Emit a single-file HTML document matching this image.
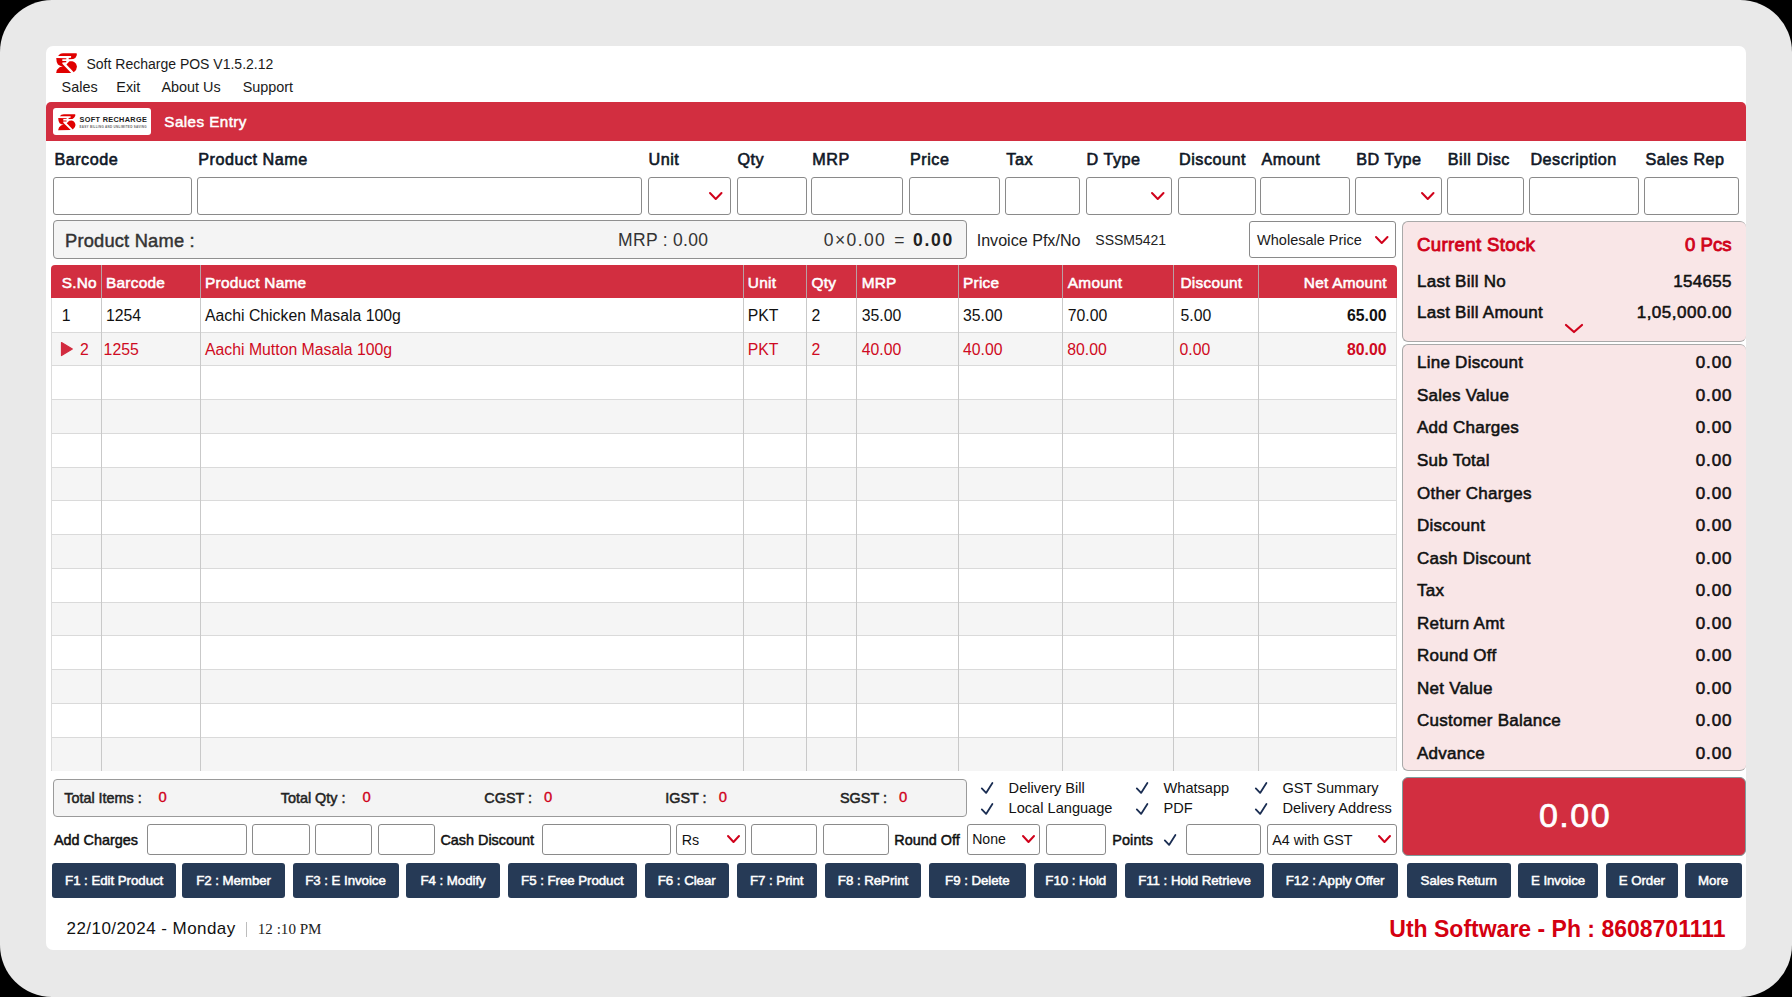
<!DOCTYPE html><html><head><meta charset="utf-8"><style>
html,body{margin:0;padding:0;}
body{width:1792px;height:997px;overflow:hidden;background:#000;position:relative;font-family:"Liberation Sans", sans-serif;color:#111;}
.t{position:absolute;line-height:1;white-space:nowrap;}
.b{position:absolute;}

</style></head><body>
<div class="b" style="left:0.00px;top:0.00px;width:1792.00px;height:997.00px;background:#e9e9e9;border-radius:52px;"></div>
<div class="b" style="left:46.00px;top:46.00px;width:1700.00px;height:904.00px;background:#ffffff;border-radius:7px;"></div>
<svg class="b" style="left:55.78px;top:52.80px;width:21.19px;height:20.55px" viewBox="180 150 660 640" preserveAspectRatio="none" fill="#e00000"><path d="M245,240 L305,178 Q335,160 400,160 L812,158 Q842,168 822,232 Q790,322 718,340 L578,342 L572,302 L648,296 L652,242 Z"/>
<path d="M188,306 L498,310 Q512,326 498,342 L378,346 L376,398 L494,400 Q510,420 494,440 L378,444 L378,488 L655,775 L185,782 Q195,650 290,592 Q340,572 392,570 Q300,555 240,510 Q190,450 188,306 Z"/>
<path d="M505,512 L600,408 L690,404 Q815,440 832,575 Q830,680 732,752 Z"/></svg>
<div class="t" style="top:56.75px;font-size:14px;color:#1a1a1a;left:86.50px;">Soft Recharge POS V1.5.2.12</div>
<div class="t" style="top:79.81px;font-size:14.4px;color:#1a1a1a;left:61.60px;">Sales</div>
<div class="t" style="top:79.81px;font-size:14.4px;color:#1a1a1a;left:116.30px;">Exit</div>
<div class="t" style="top:79.81px;font-size:14.4px;color:#1a1a1a;left:161.50px;">About Us</div>
<div class="t" style="top:79.81px;font-size:14.4px;color:#1a1a1a;left:242.70px;">Support</div>
<div class="b" style="left:46.00px;top:102.00px;width:1700.00px;height:39.00px;background:#d22e40;border-radius:5px 5px 0 0;"></div>
<div class="b" style="left:53.40px;top:108.30px;width:97.60px;height:26.70px;background:#fff;border-radius:3px;"></div>
<svg class="b" style="left:58.00px;top:114.10px;width:17.70px;height:16.50px" viewBox="180 150 660 640" preserveAspectRatio="none" fill="#e00000"><path d="M245,240 L305,178 Q335,160 400,160 L812,158 Q842,168 822,232 Q790,322 718,340 L578,342 L572,302 L648,296 L652,242 Z"/>
<path d="M188,306 L498,310 Q512,326 498,342 L378,346 L376,398 L494,400 Q510,420 494,440 L378,444 L378,488 L655,775 L185,782 Q195,650 290,592 Q340,572 392,570 Q300,555 240,510 Q190,450 188,306 Z"/>
<path d="M505,512 L600,408 L690,404 Q815,440 832,575 Q830,680 732,752 Z"/></svg>
<div class="t" style="top:116.32px;font-size:7.3px;font-weight:700;color:#1a1a1a;letter-spacing:0.33px;left:79.60px;">SOFT RECHARGE</div>
<div class="t" style="top:125.76px;font-size:3.0px;font-weight:700;color:#666;letter-spacing:0.3px;left:79.50px;">EASY BILLING AND UNLIMITED SAVING</div>
<div class="t" style="top:113.93px;font-size:15.2px;color:#fff;letter-spacing:0.45px;left:164.30px;-webkit-text-stroke:0.5px #fff;">Sales Entry</div>
<div class="t" style="top:150.68px;font-size:16.2px;color:#0f1726;letter-spacing:0.5px;left:54.40px;-webkit-text-stroke:0.6px #0f1726;">Barcode</div>
<div class="b" style="left:53.40px;top:177.20px;width:138.90px;height:37.60px;background:#fff;border:1px solid #8a8a8a;box-sizing:border-box;border-radius:3px;"></div>
<div class="t" style="top:150.68px;font-size:16.2px;color:#0f1726;letter-spacing:0.5px;left:198.20px;-webkit-text-stroke:0.6px #0f1726;">Product Name</div>
<div class="b" style="left:197.20px;top:177.20px;width:444.80px;height:37.60px;background:#fff;border:1px solid #8a8a8a;box-sizing:border-box;border-radius:3px;"></div>
<div class="t" style="top:150.68px;font-size:16.2px;color:#0f1726;letter-spacing:0.5px;left:648.50px;-webkit-text-stroke:0.6px #0f1726;">Unit</div>
<div class="b" style="left:647.50px;top:177.20px;width:83.50px;height:37.60px;background:#fff;border:1px solid #8a8a8a;box-sizing:border-box;border-radius:3px;"></div>
<svg class="b" style="left:708.25px;top:190.90px;width:15.5px;height:10px" viewBox="0 0 15.5 10"><path d="M2,2 L7.75,8 L13.5,2" fill="none" stroke="#d0021b" stroke-width="2.0" stroke-linecap="round" stroke-linejoin="round"/></svg>
<div class="t" style="top:150.68px;font-size:16.2px;color:#0f1726;letter-spacing:0.5px;left:737.50px;-webkit-text-stroke:0.6px #0f1726;">Qty</div>
<div class="b" style="left:736.50px;top:177.20px;width:70.00px;height:37.60px;background:#fff;border:1px solid #8a8a8a;box-sizing:border-box;border-radius:3px;"></div>
<div class="t" style="top:150.68px;font-size:16.2px;color:#0f1726;letter-spacing:0.5px;left:812.30px;-webkit-text-stroke:0.6px #0f1726;">MRP</div>
<div class="b" style="left:811.30px;top:177.20px;width:92.20px;height:37.60px;background:#fff;border:1px solid #8a8a8a;box-sizing:border-box;border-radius:3px;"></div>
<div class="t" style="top:150.68px;font-size:16.2px;color:#0f1726;letter-spacing:0.5px;left:910.00px;-webkit-text-stroke:0.6px #0f1726;">Price</div>
<div class="b" style="left:909.00px;top:177.20px;width:91.00px;height:37.60px;background:#fff;border:1px solid #8a8a8a;box-sizing:border-box;border-radius:3px;"></div>
<div class="t" style="top:150.68px;font-size:16.2px;color:#0f1726;letter-spacing:0.5px;left:1006.30px;-webkit-text-stroke:0.6px #0f1726;">Tax</div>
<div class="b" style="left:1005.30px;top:177.20px;width:74.70px;height:37.60px;background:#fff;border:1px solid #8a8a8a;box-sizing:border-box;border-radius:3px;"></div>
<div class="t" style="top:150.68px;font-size:16.2px;color:#0f1726;letter-spacing:0.5px;left:1086.50px;-webkit-text-stroke:0.6px #0f1726;">D Type</div>
<div class="b" style="left:1085.50px;top:177.20px;width:86.80px;height:37.60px;background:#fff;border:1px solid #8a8a8a;box-sizing:border-box;border-radius:3px;"></div>
<svg class="b" style="left:1149.55px;top:190.90px;width:15.5px;height:10px" viewBox="0 0 15.5 10"><path d="M2,2 L7.75,8 L13.5,2" fill="none" stroke="#d0021b" stroke-width="2.0" stroke-linecap="round" stroke-linejoin="round"/></svg>
<div class="t" style="top:150.68px;font-size:16.2px;color:#0f1726;letter-spacing:0.5px;left:1179.00px;-webkit-text-stroke:0.6px #0f1726;">Discount</div>
<div class="b" style="left:1178.00px;top:177.20px;width:77.50px;height:37.60px;background:#fff;border:1px solid #8a8a8a;box-sizing:border-box;border-radius:3px;"></div>
<div class="t" style="top:150.68px;font-size:16.2px;color:#0f1726;letter-spacing:0.5px;left:1261.40px;-webkit-text-stroke:0.6px #0f1726;">Amount</div>
<div class="b" style="left:1260.40px;top:177.20px;width:89.90px;height:37.60px;background:#fff;border:1px solid #8a8a8a;box-sizing:border-box;border-radius:3px;"></div>
<div class="t" style="top:150.68px;font-size:16.2px;color:#0f1726;letter-spacing:0.5px;left:1356.30px;-webkit-text-stroke:0.6px #0f1726;">BD Type</div>
<div class="b" style="left:1355.30px;top:177.20px;width:87.20px;height:37.60px;background:#fff;border:1px solid #8a8a8a;box-sizing:border-box;border-radius:3px;"></div>
<svg class="b" style="left:1419.75px;top:190.90px;width:15.5px;height:10px" viewBox="0 0 15.5 10"><path d="M2,2 L7.75,8 L13.5,2" fill="none" stroke="#d0021b" stroke-width="2.0" stroke-linecap="round" stroke-linejoin="round"/></svg>
<div class="t" style="top:150.68px;font-size:16.2px;color:#0f1726;letter-spacing:0.5px;left:1447.80px;-webkit-text-stroke:0.6px #0f1726;">Bill Disc</div>
<div class="b" style="left:1446.80px;top:177.20px;width:77.40px;height:37.60px;background:#fff;border:1px solid #8a8a8a;box-sizing:border-box;border-radius:3px;"></div>
<div class="t" style="top:150.68px;font-size:16.2px;color:#0f1726;letter-spacing:0.5px;left:1530.40px;-webkit-text-stroke:0.6px #0f1726;">Description</div>
<div class="b" style="left:1529.40px;top:177.20px;width:110.00px;height:37.60px;background:#fff;border:1px solid #8a8a8a;box-sizing:border-box;border-radius:3px;"></div>
<div class="t" style="top:150.68px;font-size:16.2px;color:#0f1726;letter-spacing:0.5px;left:1645.40px;-webkit-text-stroke:0.6px #0f1726;">Sales Rep</div>
<div class="b" style="left:1644.40px;top:177.20px;width:95.10px;height:37.60px;background:#fff;border:1px solid #8a8a8a;box-sizing:border-box;border-radius:3px;"></div>
<div class="b" style="left:53.00px;top:220.20px;width:913.80px;height:38.40px;background:#f4f4f4;border:1px solid #8f8f8f;box-sizing:border-box;border-radius:4px;"></div>
<div class="t" style="top:231.51px;font-size:18.3px;color:#333;letter-spacing:0.2px;left:65.00px;-webkit-text-stroke:0.45px #333;">Product Name :</div>
<div class="t" style="top:232.48px;font-size:17.5px;color:#333;letter-spacing:0.3px;left:618.10px;">MRP : 0.00</div>
<div class="t" style="top:232.48px;font-size:17.5px;color:#333;letter-spacing:0.6px;right:839.80px;margin-right:-0.6px;margin-right:-1.7px;word-spacing:2.5px;"><span style="letter-spacing:1.4px">0×0.00</span> = <b style="color:#222;letter-spacing:1.7px">0.00</b></div>
<div class="t" style="top:231.67px;font-size:16.1px;color:#222;left:976.70px;">Invoice Pfx/No</div>
<div class="t" style="top:233.15px;font-size:14px;color:#222;left:1095.30px;">SSSM5421</div>
<div class="b" style="left:1249.20px;top:221.30px;width:147.20px;height:37.20px;background:#fff;border:1px solid #8a8a8a;box-sizing:border-box;border-radius:3px;"></div>
<div class="t" style="top:232.52px;font-size:14.5px;color:#1a1a1a;left:1257.10px;">Wholesale Price</div>
<svg class="b" style="left:1373.85px;top:234.60px;width:15.5px;height:10px" viewBox="0 0 15.5 10"><path d="M2,2 L7.75,8 L13.5,2" fill="none" stroke="#d0021b" stroke-width="2.0" stroke-linecap="round" stroke-linejoin="round"/></svg>
<div class="b" style="left:51.20px;top:298.30px;width:1345.60px;height:472.50px;background:#fff;border-left:1px solid #dcdcdc;border-right:1px solid #dcdcdc;border-bottom:1px solid #d6d6d6;box-sizing:border-box;"></div>
<div class="b" style="left:52.20px;top:332.05px;width:1343.60px;height:33.75px;background:#f5f5f5;"></div>
<div class="b" style="left:52.20px;top:331.55px;width:1343.60px;height:1.00px;background:#dadada;"></div>
<div class="b" style="left:52.20px;top:365.30px;width:1343.60px;height:1.00px;background:#dadada;"></div>
<div class="b" style="left:52.20px;top:399.55px;width:1343.60px;height:33.75px;background:#f5f5f5;"></div>
<div class="b" style="left:52.20px;top:399.05px;width:1343.60px;height:1.00px;background:#dadada;"></div>
<div class="b" style="left:52.20px;top:432.80px;width:1343.60px;height:1.00px;background:#dadada;"></div>
<div class="b" style="left:52.20px;top:467.05px;width:1343.60px;height:33.75px;background:#f5f5f5;"></div>
<div class="b" style="left:52.20px;top:466.55px;width:1343.60px;height:1.00px;background:#dadada;"></div>
<div class="b" style="left:52.20px;top:500.30px;width:1343.60px;height:1.00px;background:#dadada;"></div>
<div class="b" style="left:52.20px;top:534.55px;width:1343.60px;height:33.75px;background:#f5f5f5;"></div>
<div class="b" style="left:52.20px;top:534.05px;width:1343.60px;height:1.00px;background:#dadada;"></div>
<div class="b" style="left:52.20px;top:567.80px;width:1343.60px;height:1.00px;background:#dadada;"></div>
<div class="b" style="left:52.20px;top:602.05px;width:1343.60px;height:33.75px;background:#f5f5f5;"></div>
<div class="b" style="left:52.20px;top:601.55px;width:1343.60px;height:1.00px;background:#dadada;"></div>
<div class="b" style="left:52.20px;top:635.30px;width:1343.60px;height:1.00px;background:#dadada;"></div>
<div class="b" style="left:52.20px;top:669.55px;width:1343.60px;height:33.75px;background:#f5f5f5;"></div>
<div class="b" style="left:52.20px;top:669.05px;width:1343.60px;height:1.00px;background:#dadada;"></div>
<div class="b" style="left:52.20px;top:702.80px;width:1343.60px;height:1.00px;background:#dadada;"></div>
<div class="b" style="left:52.20px;top:737.05px;width:1343.60px;height:33.75px;background:#f5f5f5;"></div>
<div class="b" style="left:52.20px;top:736.55px;width:1343.60px;height:1.00px;background:#dadada;"></div>
<div class="b" style="left:51.20px;top:265.10px;width:1345.60px;height:33.20px;background:#d22e40;border-radius:4px 4px 0 0;"></div>
<div class="b" style="left:101.00px;top:265.10px;width:1.00px;height:505.70px;background:#c9c9c9;"></div>
<div class="b" style="left:200.00px;top:265.10px;width:1.00px;height:505.70px;background:#c9c9c9;"></div>
<div class="b" style="left:742.80px;top:265.10px;width:1.00px;height:505.70px;background:#c9c9c9;"></div>
<div class="b" style="left:806.20px;top:265.10px;width:1.00px;height:505.70px;background:#c9c9c9;"></div>
<div class="b" style="left:856.30px;top:265.10px;width:1.00px;height:505.70px;background:#c9c9c9;"></div>
<div class="b" style="left:958.00px;top:265.10px;width:1.00px;height:505.70px;background:#c9c9c9;"></div>
<div class="b" style="left:1061.50px;top:265.10px;width:1.00px;height:505.70px;background:#c9c9c9;"></div>
<div class="b" style="left:1173.10px;top:265.10px;width:1.00px;height:505.70px;background:#c9c9c9;"></div>
<div class="b" style="left:1258.10px;top:265.10px;width:1.00px;height:505.70px;background:#c9c9c9;"></div>
<div class="b" style="left:101.00px;top:265.10px;width:1.00px;height:33.20px;background:#b9a0a4;"></div>
<div class="b" style="left:200.00px;top:265.10px;width:1.00px;height:33.20px;background:#b9a0a4;"></div>
<div class="b" style="left:742.80px;top:265.10px;width:1.00px;height:33.20px;background:#b9a0a4;"></div>
<div class="b" style="left:806.20px;top:265.10px;width:1.00px;height:33.20px;background:#b9a0a4;"></div>
<div class="b" style="left:856.30px;top:265.10px;width:1.00px;height:33.20px;background:#b9a0a4;"></div>
<div class="b" style="left:958.00px;top:265.10px;width:1.00px;height:33.20px;background:#b9a0a4;"></div>
<div class="b" style="left:1061.50px;top:265.10px;width:1.00px;height:33.20px;background:#b9a0a4;"></div>
<div class="b" style="left:1173.10px;top:265.10px;width:1.00px;height:33.20px;background:#b9a0a4;"></div>
<div class="b" style="left:1258.10px;top:265.10px;width:1.00px;height:33.20px;background:#b9a0a4;"></div>
<div class="t" style="top:274.76px;font-size:15.4px;color:#fff;letter-spacing:0.25px;left:61.70px;-webkit-text-stroke:0.55px #fff;">S.No</div>
<div class="t" style="top:274.76px;font-size:15.4px;color:#fff;letter-spacing:0.25px;left:106.00px;-webkit-text-stroke:0.55px #fff;">Barcode</div>
<div class="t" style="top:274.76px;font-size:15.4px;color:#fff;letter-spacing:0.25px;left:205.00px;-webkit-text-stroke:0.55px #fff;">Product Name</div>
<div class="t" style="top:274.76px;font-size:15.4px;color:#fff;letter-spacing:0.25px;left:747.80px;-webkit-text-stroke:0.55px #fff;">Unit</div>
<div class="t" style="top:274.76px;font-size:15.4px;color:#fff;letter-spacing:0.25px;left:811.60px;-webkit-text-stroke:0.55px #fff;">Qty</div>
<div class="t" style="top:274.76px;font-size:15.4px;color:#fff;letter-spacing:0.25px;left:861.70px;-webkit-text-stroke:0.55px #fff;">MRP</div>
<div class="t" style="top:274.76px;font-size:15.4px;color:#fff;letter-spacing:0.25px;left:963.00px;-webkit-text-stroke:0.55px #fff;">Price</div>
<div class="t" style="top:274.76px;font-size:15.4px;color:#fff;letter-spacing:0.25px;left:1067.80px;-webkit-text-stroke:0.55px #fff;">Amount</div>
<div class="t" style="top:274.76px;font-size:15.4px;color:#fff;letter-spacing:0.25px;left:1180.50px;-webkit-text-stroke:0.55px #fff;">Discount</div>
<div class="t" style="top:274.76px;font-size:15.4px;color:#fff;letter-spacing:0.25px;right:405.50px;margin-right:-0.25px;-webkit-text-stroke:0.55px #fff;">Net Amount</div>
<div class="t" style="top:308.32px;font-size:15.8px;left:61.80px;">1</div>
<div class="t" style="top:308.32px;font-size:15.8px;left:106.00px;">1254</div>
<div class="t" style="top:308.32px;font-size:15.8px;left:205.00px;">Aachi Chicken Masala 100g</div>
<div class="t" style="top:308.32px;font-size:15.8px;left:747.80px;">PKT</div>
<div class="t" style="top:308.32px;font-size:15.8px;left:811.60px;">2</div>
<div class="t" style="top:308.32px;font-size:15.8px;left:861.70px;">35.00</div>
<div class="t" style="top:308.32px;font-size:15.8px;left:963.00px;">35.00</div>
<div class="t" style="top:308.32px;font-size:15.8px;left:1067.80px;">70.00</div>
<div class="t" style="top:308.32px;font-size:15.8px;left:1180.50px;">5.00</div>
<div class="t" style="top:308.32px;font-size:15.8px;font-weight:700;right:405.50px;">65.00</div>
<svg class="b" style="left:60px;top:340.7px;width:14px;height:16px" viewBox="0 0 14 16"><path d="M1.5,1.5 L12.3,8 L1.5,14.5 Z" fill="#d22b3f" stroke="#d22b3f" stroke-width="1.2" stroke-linejoin="round"/></svg>
<div class="t" style="top:341.82px;font-size:15.8px;color:#cf0a22;left:80.00px;">2</div>
<div class="t" style="top:341.82px;font-size:15.8px;color:#cf0a22;left:103.60px;">1255</div>
<div class="t" style="top:341.82px;font-size:15.8px;color:#cf0a22;left:205.00px;">Aachi Mutton Masala 100g</div>
<div class="t" style="top:341.82px;font-size:15.8px;color:#cf0a22;left:747.80px;">PKT</div>
<div class="t" style="top:341.82px;font-size:15.8px;color:#cf0a22;left:811.60px;">2</div>
<div class="t" style="top:341.82px;font-size:15.8px;color:#cf0a22;left:861.70px;">40.00</div>
<div class="t" style="top:341.82px;font-size:15.8px;color:#cf0a22;left:963.00px;">40.00</div>
<div class="t" style="top:341.82px;font-size:15.8px;color:#cf0a22;left:1067.30px;">80.00</div>
<div class="t" style="top:341.82px;font-size:15.8px;color:#cf0a22;left:1179.50px;">0.00</div>
<div class="t" style="top:341.82px;font-size:15.8px;font-weight:700;color:#cf0a22;right:405.50px;">80.00</div>
<div class="b" style="left:1401.60px;top:221.00px;width:344.40px;height:121.20px;background:#f9e6e7;border:1px solid #a9a9a9;box-sizing:border-box;border-radius:6px;border-right:none;"></div>
<div class="b" style="left:1401.60px;top:343.60px;width:344.40px;height:427.20px;background:#f9e6e7;border:1px solid #a9a9a9;box-sizing:border-box;border-radius:6px;border-right:none;"></div>
<div class="t" style="top:235.85px;font-size:18.6px;color:#d0021b;letter-spacing:0.35px;left:1417.00px;-webkit-text-stroke:0.85px #d0021b;">Current Stock</div>
<div class="t" style="top:235.85px;font-size:18.6px;color:#d0021b;right:60.50px;-webkit-text-stroke:0.85px #d0021b;">0 Pcs</div>
<div class="t" style="top:272.51px;font-size:17px;letter-spacing:0.25px;left:1417.00px;-webkit-text-stroke:0.55px #111;">Last Bill No</div>
<div class="t" style="top:272.51px;font-size:17px;letter-spacing:0.3px;right:60.50px;margin-right:-0.3px;-webkit-text-stroke:0.55px #111;">154655</div>
<div class="t" style="top:303.61px;font-size:17px;letter-spacing:0.25px;left:1417.00px;-webkit-text-stroke:0.55px #111;">Last Bill Amount</div>
<div class="t" style="top:303.61px;font-size:17px;letter-spacing:0.5px;right:60.50px;margin-right:-0.5px;-webkit-text-stroke:0.55px #111;">1,05,000.00</div>
<svg class="b" style="left:1564.00px;top:323.00px;width:20px;height:11px" viewBox="0 0 20 11"><path d="M2,2 L10.0,9 L18,2" fill="none" stroke="#d0021b" stroke-width="2.2" stroke-linecap="round" stroke-linejoin="round"/></svg>
<div class="t" style="top:354.31px;font-size:17px;letter-spacing:0.25px;left:1417.00px;-webkit-text-stroke:0.55px #111;">Line Discount</div>
<div class="t" style="top:354.31px;font-size:17px;letter-spacing:0.9px;right:60.50px;margin-right:-0.9px;-webkit-text-stroke:0.55px #111;">0.00</div>
<div class="t" style="top:386.86px;font-size:17px;letter-spacing:0.25px;left:1417.00px;-webkit-text-stroke:0.55px #111;">Sales Value</div>
<div class="t" style="top:386.86px;font-size:17px;letter-spacing:0.9px;right:60.50px;margin-right:-0.9px;-webkit-text-stroke:0.55px #111;">0.00</div>
<div class="t" style="top:419.41px;font-size:17px;letter-spacing:0.25px;left:1417.00px;-webkit-text-stroke:0.55px #111;">Add Charges</div>
<div class="t" style="top:419.41px;font-size:17px;letter-spacing:0.9px;right:60.50px;margin-right:-0.9px;-webkit-text-stroke:0.55px #111;">0.00</div>
<div class="t" style="top:451.96px;font-size:17px;letter-spacing:0.25px;left:1417.00px;-webkit-text-stroke:0.55px #111;">Sub Total</div>
<div class="t" style="top:451.96px;font-size:17px;letter-spacing:0.9px;right:60.50px;margin-right:-0.9px;-webkit-text-stroke:0.55px #111;">0.00</div>
<div class="t" style="top:484.51px;font-size:17px;letter-spacing:0.25px;left:1417.00px;-webkit-text-stroke:0.55px #111;">Other Charges</div>
<div class="t" style="top:484.51px;font-size:17px;letter-spacing:0.9px;right:60.50px;margin-right:-0.9px;-webkit-text-stroke:0.55px #111;">0.00</div>
<div class="t" style="top:517.06px;font-size:17px;letter-spacing:0.25px;left:1417.00px;-webkit-text-stroke:0.55px #111;">Discount</div>
<div class="t" style="top:517.06px;font-size:17px;letter-spacing:0.9px;right:60.50px;margin-right:-0.9px;-webkit-text-stroke:0.55px #111;">0.00</div>
<div class="t" style="top:549.61px;font-size:17px;letter-spacing:0.25px;left:1417.00px;-webkit-text-stroke:0.55px #111;">Cash Discount</div>
<div class="t" style="top:549.61px;font-size:17px;letter-spacing:0.9px;right:60.50px;margin-right:-0.9px;-webkit-text-stroke:0.55px #111;">0.00</div>
<div class="t" style="top:582.16px;font-size:17px;letter-spacing:0.25px;left:1417.00px;-webkit-text-stroke:0.55px #111;">Tax</div>
<div class="t" style="top:582.16px;font-size:17px;letter-spacing:0.9px;right:60.50px;margin-right:-0.9px;-webkit-text-stroke:0.55px #111;">0.00</div>
<div class="t" style="top:614.71px;font-size:17px;letter-spacing:0.25px;left:1417.00px;-webkit-text-stroke:0.55px #111;">Return Amt</div>
<div class="t" style="top:614.71px;font-size:17px;letter-spacing:0.9px;right:60.50px;margin-right:-0.9px;-webkit-text-stroke:0.55px #111;">0.00</div>
<div class="t" style="top:647.26px;font-size:17px;letter-spacing:0.25px;left:1417.00px;-webkit-text-stroke:0.55px #111;">Round Off</div>
<div class="t" style="top:647.26px;font-size:17px;letter-spacing:0.9px;right:60.50px;margin-right:-0.9px;-webkit-text-stroke:0.55px #111;">0.00</div>
<div class="t" style="top:679.81px;font-size:17px;letter-spacing:0.25px;left:1417.00px;-webkit-text-stroke:0.55px #111;">Net Value</div>
<div class="t" style="top:679.81px;font-size:17px;letter-spacing:0.9px;right:60.50px;margin-right:-0.9px;-webkit-text-stroke:0.55px #111;">0.00</div>
<div class="t" style="top:712.36px;font-size:17px;letter-spacing:0.25px;left:1417.00px;-webkit-text-stroke:0.55px #111;">Customer Balance</div>
<div class="t" style="top:712.36px;font-size:17px;letter-spacing:0.9px;right:60.50px;margin-right:-0.9px;-webkit-text-stroke:0.55px #111;">0.00</div>
<div class="t" style="top:744.91px;font-size:17px;letter-spacing:0.25px;left:1417.00px;-webkit-text-stroke:0.55px #111;">Advance</div>
<div class="t" style="top:744.91px;font-size:17px;letter-spacing:0.9px;right:60.50px;margin-right:-0.9px;-webkit-text-stroke:0.55px #111;">0.00</div>
<div class="b" style="left:1401.90px;top:776.50px;width:343.90px;height:79.50px;background:#d22e40;border:1px solid #7f9c9c;box-sizing:border-box;border-radius:6px;"></div>
<div class="t" style="top:798.21px;font-size:34px;color:#fff;letter-spacing:1.5px;left:1175.00px;width:800px;text-align:center;-webkit-text-stroke:0.7px #fff;">0.00</div>
<div class="b" style="left:53.00px;top:778.60px;width:913.60px;height:38.30px;background:#f4f4f4;border:1px solid #9a9a9a;box-sizing:border-box;border-radius:4px;"></div>
<div class="t" style="top:790.61px;font-size:14.4px;color:#222;left:64.20px;-webkit-text-stroke:0.5px #222;">Total Items :</div>
<div class="t" style="top:790.27px;font-size:14.8px;color:#d0021b;left:158.50px;-webkit-text-stroke:0.35px #d0021b;">0</div>
<div class="t" style="top:790.61px;font-size:14.4px;color:#222;left:280.70px;-webkit-text-stroke:0.5px #222;">Total Qty :</div>
<div class="t" style="top:790.27px;font-size:14.8px;color:#d0021b;left:362.60px;-webkit-text-stroke:0.35px #d0021b;">0</div>
<div class="t" style="top:790.61px;font-size:14.4px;color:#222;left:484.30px;-webkit-text-stroke:0.5px #222;">CGST :</div>
<div class="t" style="top:790.27px;font-size:14.8px;color:#d0021b;left:543.90px;-webkit-text-stroke:0.35px #d0021b;">0</div>
<div class="t" style="top:790.61px;font-size:14.4px;color:#222;left:665.30px;-webkit-text-stroke:0.5px #222;">IGST :</div>
<div class="t" style="top:790.27px;font-size:14.8px;color:#d0021b;left:718.70px;-webkit-text-stroke:0.35px #d0021b;">0</div>
<div class="t" style="top:790.61px;font-size:14.4px;color:#222;left:840.00px;-webkit-text-stroke:0.5px #222;">SGST :</div>
<div class="t" style="top:790.27px;font-size:14.8px;color:#d0021b;left:899.00px;-webkit-text-stroke:0.35px #d0021b;">0</div>
<svg class="b" style="left:980.20px;top:780.60px;width:14px;height:14px" viewBox="-7 -7 14 14"><path d="M-5.2,0.4 L-0.9,4.9 L5.4,-5" fill="none" stroke="#1a2d52" stroke-width="1.8" stroke-linecap="round" stroke-linejoin="round"/></svg>
<svg class="b" style="left:980.20px;top:801.80px;width:14px;height:14px" viewBox="-7 -7 14 14"><path d="M-5.2,0.4 L-0.9,4.9 L5.4,-5" fill="none" stroke="#1a2d52" stroke-width="1.8" stroke-linecap="round" stroke-linejoin="round"/></svg>
<div class="t" style="top:780.54px;font-size:14.6px;left:1008.60px;">Delivery Bill</div>
<div class="t" style="top:801.34px;font-size:14.6px;left:1008.60px;">Local Language</div>
<svg class="b" style="left:1135.20px;top:780.60px;width:14px;height:14px" viewBox="-7 -7 14 14"><path d="M-5.2,0.4 L-0.9,4.9 L5.4,-5" fill="none" stroke="#1a2d52" stroke-width="1.8" stroke-linecap="round" stroke-linejoin="round"/></svg>
<svg class="b" style="left:1135.20px;top:801.80px;width:14px;height:14px" viewBox="-7 -7 14 14"><path d="M-5.2,0.4 L-0.9,4.9 L5.4,-5" fill="none" stroke="#1a2d52" stroke-width="1.8" stroke-linecap="round" stroke-linejoin="round"/></svg>
<div class="t" style="top:780.54px;font-size:14.6px;left:1163.50px;">Whatsapp</div>
<div class="t" style="top:801.34px;font-size:14.6px;left:1163.50px;">PDF</div>
<svg class="b" style="left:1254.00px;top:780.60px;width:14px;height:14px" viewBox="-7 -7 14 14"><path d="M-5.2,0.4 L-0.9,4.9 L5.4,-5" fill="none" stroke="#1a2d52" stroke-width="1.8" stroke-linecap="round" stroke-linejoin="round"/></svg>
<svg class="b" style="left:1254.00px;top:801.80px;width:14px;height:14px" viewBox="-7 -7 14 14"><path d="M-5.2,0.4 L-0.9,4.9 L5.4,-5" fill="none" stroke="#1a2d52" stroke-width="1.8" stroke-linecap="round" stroke-linejoin="round"/></svg>
<div class="t" style="top:780.54px;font-size:14.6px;left:1282.40px;">GST Summary</div>
<div class="t" style="top:801.34px;font-size:14.6px;left:1282.40px;">Delivery Address</div>
<div class="t" style="top:833.41px;font-size:14.4px;left:54.00px;-webkit-text-stroke:0.5px #111;">Add Charges</div>
<div class="b" style="left:146.50px;top:824.40px;width:100.70px;height:30.60px;background:#fff;border:1px solid #8a8a8a;box-sizing:border-box;border-radius:3px;"></div>
<div class="b" style="left:252.30px;top:824.40px;width:57.60px;height:30.60px;background:#fff;border:1px solid #8a8a8a;box-sizing:border-box;border-radius:3px;"></div>
<div class="b" style="left:315.20px;top:824.40px;width:57.10px;height:30.60px;background:#fff;border:1px solid #8a8a8a;box-sizing:border-box;border-radius:3px;"></div>
<div class="b" style="left:377.60px;top:824.40px;width:57.10px;height:30.60px;background:#fff;border:1px solid #8a8a8a;box-sizing:border-box;border-radius:3px;"></div>
<div class="t" style="top:833.41px;font-size:14.4px;left:440.40px;-webkit-text-stroke:0.5px #111;">Cash Discount</div>
<div class="b" style="left:542.40px;top:824.40px;width:128.60px;height:30.60px;background:#fff;border:1px solid #8a8a8a;box-sizing:border-box;border-radius:3px;"></div>
<div class="b" style="left:676.30px;top:824.40px;width:70.00px;height:30.60px;background:#fff;border:1px solid #8a8a8a;box-sizing:border-box;border-radius:3px;"></div>
<div class="t" style="top:832.89px;font-size:14.3px;left:681.80px;">Rs</div>
<svg class="b" style="left:726.30px;top:834.00px;width:15px;height:10px" viewBox="0 0 15 10"><path d="M2,2 L7.5,8 L13,2" fill="none" stroke="#d0021b" stroke-width="2.0" stroke-linecap="round" stroke-linejoin="round"/></svg>
<div class="b" style="left:751.40px;top:824.40px;width:66.10px;height:30.60px;background:#fff;border:1px solid #8a8a8a;box-sizing:border-box;border-radius:3px;"></div>
<div class="b" style="left:822.60px;top:824.40px;width:66.20px;height:30.60px;background:#fff;border:1px solid #8a8a8a;box-sizing:border-box;border-radius:3px;"></div>
<div class="t" style="top:833.41px;font-size:14.4px;left:894.30px;-webkit-text-stroke:0.5px #111;">Round Off</div>
<div class="b" style="left:967.00px;top:824.40px;width:73.00px;height:30.60px;background:#fff;border:1px solid #8a8a8a;box-sizing:border-box;border-radius:3px;"></div>
<div class="t" style="top:831.96px;font-size:14.1px;left:972.20px;">None</div>
<svg class="b" style="left:1020.50px;top:834.00px;width:15px;height:10px" viewBox="0 0 15 10"><path d="M2,2 L7.5,8 L13,2" fill="none" stroke="#d0021b" stroke-width="2.0" stroke-linecap="round" stroke-linejoin="round"/></svg>
<div class="b" style="left:1045.70px;top:824.40px;width:60.60px;height:30.60px;background:#fff;border:1px solid #8a8a8a;box-sizing:border-box;border-radius:3px;"></div>
<div class="t" style="top:832.81px;font-size:14.4px;letter-spacing:0.15px;left:1112.20px;-webkit-text-stroke:0.5px #111;">Points</div>
<svg class="b" style="left:1163.00px;top:833.00px;width:14px;height:14px" viewBox="-7 -7 14 14"><path d="M-5.2,0.4 L-0.9,4.9 L5.4,-5" fill="none" stroke="#1a2d52" stroke-width="1.8" stroke-linecap="round" stroke-linejoin="round"/></svg>
<div class="b" style="left:1185.60px;top:824.40px;width:75.90px;height:30.60px;background:#fff;border:1px solid #8a8a8a;box-sizing:border-box;border-radius:3px;"></div>
<div class="b" style="left:1267.00px;top:824.40px;width:129.50px;height:30.60px;background:#fff;border:1px solid #8a8a8a;box-sizing:border-box;border-radius:3px;"></div>
<div class="t" style="top:832.79px;font-size:14.3px;left:1272.30px;">A4 with GST</div>
<svg class="b" style="left:1376.70px;top:834.00px;width:15px;height:10px" viewBox="0 0 15 10"><path d="M2,2 L7.5,8 L13,2" fill="none" stroke="#d0021b" stroke-width="2.0" stroke-linecap="round" stroke-linejoin="round"/></svg>
<div class="b" style="left:52.40px;top:863.10px;width:123.50px;height:34.50px;background:#263a56;border-radius:3px;"></div>
<div class="t" style="top:874.34px;font-size:13.3px;color:#fff;letter-spacing:-0.05px;left:-285.85px;width:800px;text-align:center;-webkit-text-stroke:0.5px #fff;">F1 : Edit Product</div>
<div class="b" style="left:182.40px;top:863.10px;width:102.30px;height:34.50px;background:#263a56;border-radius:3px;"></div>
<div class="t" style="top:874.34px;font-size:13.3px;color:#fff;letter-spacing:-0.05px;left:-166.45px;width:800px;text-align:center;-webkit-text-stroke:0.5px #fff;">F2 : Member</div>
<div class="b" style="left:292.50px;top:863.10px;width:106.00px;height:34.50px;background:#263a56;border-radius:3px;"></div>
<div class="t" style="top:874.34px;font-size:13.3px;color:#fff;letter-spacing:-0.05px;left:-54.50px;width:800px;text-align:center;-webkit-text-stroke:0.5px #fff;">F3 : E Invoice</div>
<div class="b" style="left:406.30px;top:863.10px;width:93.50px;height:34.50px;background:#263a56;border-radius:3px;"></div>
<div class="t" style="top:874.34px;font-size:13.3px;color:#fff;letter-spacing:-0.05px;left:53.05px;width:800px;text-align:center;-webkit-text-stroke:0.5px #fff;">F4 : Modify</div>
<div class="b" style="left:507.80px;top:863.10px;width:129.20px;height:34.50px;background:#263a56;border-radius:3px;"></div>
<div class="t" style="top:874.34px;font-size:13.3px;color:#fff;letter-spacing:-0.05px;left:172.40px;width:800px;text-align:center;-webkit-text-stroke:0.5px #fff;">F5 : Free Product</div>
<div class="b" style="left:645.00px;top:863.10px;width:83.50px;height:34.50px;background:#263a56;border-radius:3px;"></div>
<div class="t" style="top:874.34px;font-size:13.3px;color:#fff;letter-spacing:-0.05px;left:286.75px;width:800px;text-align:center;-webkit-text-stroke:0.5px #fff;">F6 : Clear</div>
<div class="b" style="left:736.50px;top:863.10px;width:80.50px;height:34.50px;background:#263a56;border-radius:3px;"></div>
<div class="t" style="top:874.34px;font-size:13.3px;color:#fff;letter-spacing:-0.05px;left:376.75px;width:800px;text-align:center;-webkit-text-stroke:0.5px #fff;">F7 : Print</div>
<div class="b" style="left:825.00px;top:863.10px;width:96.00px;height:34.50px;background:#263a56;border-radius:3px;"></div>
<div class="t" style="top:874.34px;font-size:13.3px;color:#fff;letter-spacing:-0.05px;left:473.00px;width:800px;text-align:center;-webkit-text-stroke:0.5px #fff;">F8 : RePrint</div>
<div class="b" style="left:929.00px;top:863.10px;width:96.70px;height:34.50px;background:#263a56;border-radius:3px;"></div>
<div class="t" style="top:874.34px;font-size:13.3px;color:#fff;letter-spacing:-0.05px;left:577.35px;width:800px;text-align:center;-webkit-text-stroke:0.5px #fff;">F9 : Delete</div>
<div class="b" style="left:1034.20px;top:863.10px;width:83.10px;height:34.50px;background:#263a56;border-radius:3px;"></div>
<div class="t" style="top:874.34px;font-size:13.3px;color:#fff;letter-spacing:-0.05px;left:675.75px;width:800px;text-align:center;-webkit-text-stroke:0.5px #fff;">F10 : Hold</div>
<div class="b" style="left:1125.40px;top:863.10px;width:138.20px;height:34.50px;background:#263a56;border-radius:3px;"></div>
<div class="t" style="top:874.34px;font-size:13.3px;color:#fff;letter-spacing:-0.05px;left:794.50px;width:800px;text-align:center;-webkit-text-stroke:0.5px #fff;">F11 : Hold Retrieve</div>
<div class="b" style="left:1271.70px;top:863.10px;width:126.80px;height:34.50px;background:#263a56;border-radius:3px;"></div>
<div class="t" style="top:874.34px;font-size:13.3px;color:#fff;letter-spacing:-0.05px;left:935.10px;width:800px;text-align:center;-webkit-text-stroke:0.5px #fff;">F12 : Apply Offer</div>
<div class="b" style="left:1407.00px;top:863.10px;width:103.50px;height:34.50px;background:#263a56;border-radius:3px;"></div>
<div class="t" style="top:874.34px;font-size:13.3px;color:#fff;letter-spacing:-0.05px;left:1058.75px;width:800px;text-align:center;-webkit-text-stroke:0.5px #fff;">Sales Return</div>
<div class="b" style="left:1518.10px;top:863.10px;width:79.90px;height:34.50px;background:#263a56;border-radius:3px;"></div>
<div class="t" style="top:874.34px;font-size:13.3px;color:#fff;letter-spacing:-0.05px;left:1158.05px;width:800px;text-align:center;-webkit-text-stroke:0.5px #fff;">E Invoice</div>
<div class="b" style="left:1605.90px;top:863.10px;width:71.90px;height:34.50px;background:#263a56;border-radius:3px;"></div>
<div class="t" style="top:874.34px;font-size:13.3px;color:#fff;letter-spacing:-0.05px;left:1241.85px;width:800px;text-align:center;-webkit-text-stroke:0.5px #fff;">E Order</div>
<div class="b" style="left:1684.60px;top:863.10px;width:57.10px;height:34.50px;background:#263a56;border-radius:3px;"></div>
<div class="t" style="top:874.34px;font-size:13.3px;color:#fff;letter-spacing:-0.05px;left:1313.15px;width:800px;text-align:center;-webkit-text-stroke:0.5px #fff;">More</div>
<div class="t" style="top:920.01px;font-size:17px;letter-spacing:0.45px;left:66.50px;">22/10/2024 - Monday</div>
<div class="b" style="left:245.60px;top:922.30px;width:1.30px;height:14.70px;background:#bdbdbd;"></div>
<div class="t" style="top:921.96px;font-size:15.1px;color:#222;font-family:'Liberation Serif', serif;left:257.80px;">12 :10 PM</div>
<div class="t" style="top:918.13px;font-size:23px;font-weight:700;color:#d40010;right:66.50px;">Uth Software - Ph : 8608701111</div>
</body></html>
